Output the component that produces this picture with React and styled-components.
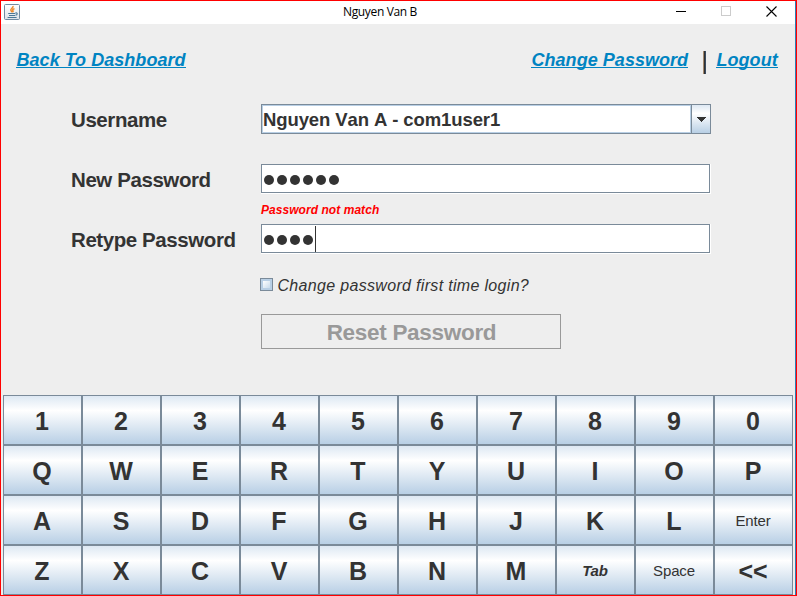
import React from "react";
import styled, { createGlobalStyle } from "styled-components";

const GlobalStyle = createGlobalStyle`
  * { box-sizing: border-box; }
  html, body { margin: 0; padding: 0; overflow: hidden; }
  body { font-family: "Liberation Sans", Arial, sans-serif; color: #333; font-kerning: none; }
`;

const Window = styled.div`
  width: 797px;
  height: 596px;
  display: flex;
  flex-direction: column;
  background: #eee;
  border: 1px solid #f00;
  box-shadow: inset -1px 0 #2f7fb5;
`;

const TitleBar = styled.header`
  height: 23px;
  flex: none;
  display: grid;
  grid-template-columns: 138px 1fr 138px;
  align-items: center;
  background: #fff;
  margin-right: 1px;
  padding: 0 0 2px 3px;
`;

const Title = styled.div`
  text-align: center;
  font: 12px/18px "Open Sans", sans-serif;
  color: #000;
  letter-spacing: -0.35px;
  padding-right: 39px;
`;

const WindowControls = styled.div`
  display: flex;
  align-items: center;
  justify-content: flex-end;
  padding-right: 18px;
  gap: 34px;
  svg { display: block; }
`;

const Nav = styled.nav`
  flex: none;
  height: 80px;
  display: flex;
  align-items: flex-start;
  padding: 24px 18px 0 15px;
`;

const NavLink = styled.a`
  font: italic bold 18px/24px "Liberation Sans", Arial, sans-serif;
  color: #0084c2;
  letter-spacing: 0.04px;
  background: linear-gradient(#0084c2, #0084c2) 0 19px / 100% 1px no-repeat;
  white-space: nowrap;
  width: ${(p) => p.$w}px;
  padding-left: 0.5px;
  margin-left: ${(p) => (p.$end ? "auto" : 0)};
`;

const Divider = styled.span`
  width: 3px;
  height: 23px;
  margin: 3px 10px 0 15px;
  background: linear-gradient(90deg, #a58a70 1px, #303030 1px, #303030 2px, #3b4c60 2px);
`;

const Form = styled.main`
  flex: none;
  height: 291px;
  display: grid;
  grid-template-columns: 190px 450px;
  grid-template-rows: 30px 30px 30px 30px 30px 31px 29px 35px;
  padding-left: 70px;
`;

const Label = styled.label`
  grid-column: 1;
  grid-row: ${(p) => p.$row};
  font-size: 20.5px;
  font-weight: bold;
  line-height: 32px;
  letter-spacing: -0.42px;
  white-space: nowrap;
`;

const Combo = styled.div`
  grid-column: 2;
  grid-row: 1;
  display: flex;
  border: 1px solid #7a8a99;
`;

const ComboValue = styled.div`
  flex: 1;
  background: #fff;
  border: 1px solid #b8cfe5;
  font-size: 18.5px;
  font-weight: bold;
  line-height: 28px;
  height: 28px;
  letter-spacing: -0.1px;
  white-space: nowrap;
`;

const ComboArrow = styled.div`
  width: 19px;
  border-left: 1px solid #7a8a99;
  background: linear-gradient(#dde8f3, #fff 30%, #b8cfe5);
  display: flex;
  align-items: center;
  padding-left: 4px;
`;

const PasswordField = styled.div`
  grid-column: 2;
  grid-row: ${(p) => p.$row};
  width: 450px;
  height: 30px;
  border-right: 1px solid #fff;
  border-bottom: 1px solid #fff;
`;

const FieldInner = styled.div`
  height: 29px;
  border: 1px solid #7a8a99;
  background: #fff;
  display: flex;
  align-items: center;
  gap: 3px;
  padding: 3px 0 0 2px;
`;

const Dot = styled.i`
  width: 10px;
  height: 10px;
  border-radius: 50%;
  background: #333;
`;

const Caret = styled.i`
  width: 1px;
  height: 26px;
  margin: -2px 0 0 -1px;
  background: #333;
`;

const ErrorText = styled.div`
  grid-column: 2;
  grid-row: 4;
  font-size: 12px;
  font-weight: bold;
  font-style: italic;
  line-height: 32px;
  letter-spacing: 0.05px;
  color: #f00;
`;

const CheckRow = styled.div`
  grid-column: 2;
  grid-row: 6 / 8;
  display: flex;
  align-items: center;
  margin-left: -1px;
  gap: 4.5px;
  padding-top: 4px;
  font-size: 16px;
  font-style: italic;
  letter-spacing: 0.32px;
  white-space: nowrap;
`;

const Checkbox = styled.span`
  width: 13px;
  height: 13px;
  border: 1px solid #7a8a99;
  background: linear-gradient(135deg, #fff, #c8dbec) center / 7px 7px no-repeat, #b8cfe5;
  margin-bottom: 4px;
`;

const ResetButton = styled.button`
  grid-column: 2;
  grid-row: 8;
  width: 300px;
  height: 35px;
  padding: 1px 0 0 1px;
  border: 1px solid #999;
  background: #eee;
  color: #999;
  font: bold 22.5px/34px "Liberation Sans", Arial, sans-serif;
  letter-spacing: -0.3px;
`;

const Keyboard = styled.section`
  flex: none;
  display: grid;
  grid-template-columns: repeat(10, 79px);
  grid-auto-rows: 50px;
  margin-left: 2px;
`;

const keyFonts = {
  big: 'bold 25px/46px "Liberation Sans", Arial, sans-serif',
  small: '15px/46px "Liberation Sans", Arial, sans-serif',
  tab: 'italic bold 15px/46px "Liberation Sans", Arial, sans-serif',
};

const Key = styled.button`
  padding: 2px 1px 0 0;
  border: 1px solid #7a8a99;
  background: linear-gradient(#dde8f3, #fff 30%, #b8cfe5);
  color: #333;
  font: ${(p) => keyFonts[p.$kind]};
  letter-spacing: ${(p) => (p.$kind === "big" ? 0 : -0.15)}px;
`;

const keys = [..."1234567890QWERTYUIOPASDFGHJKL", "Enter", ..."ZXCVBNM", "Tab", "Space", "<<"];
const kindOf = (k) => (k === "Tab" ? "tab" : k.length > 2 ? "small" : "big");

const JavaIcon = () => (
  <svg width="16" height="16" viewBox="0 0 16 16" fill="none">
    <defs>
      <linearGradient id="tile" x2="0" y2="1">
        <stop stopColor="#fff" />
        <stop offset="1" stopColor="#dce3ea" />
      </linearGradient>
    </defs>
    <rect x=".5" y=".5" width="15" height="15" rx="1" fill="url(#tile)" stroke="#728ba2" />
    <path d="M9 2c.6 1.8-2.6 2.5-2.2 4.2.2.8 1 1.2 1.2 2M10.5 4.6c-1.7.7-2.3 1.1-1.6 2 .5.7.1 1.2-.5 1.6" stroke="#ee8b2d" strokeWidth="1.5" />
    <path d="M4.2 9.5h7M5 11.5h6M3.6 13.5h9M11.4 9c2.4-.8 2.4 1.8 0 2.3" stroke="#4b7897" strokeWidth="1.1" />
  </svg>
);

const Dots = ({ count }) => Array.from({ length: count }, (_, i) => <Dot key={i} />);

export default function App() {
  return (
    <Window>
      <GlobalStyle />
      <TitleBar>
        <JavaIcon />
        <Title>Nguyen Van B</Title>
        <WindowControls>
          <svg width="11" height="11" shapeRendering="crispEdges"><path d="M0 5.5h10" stroke="#000" /></svg>
          <svg width="11" height="11" shapeRendering="crispEdges"><path d="M.5.5h9v9h-9z" fill="none" stroke="#ccc" /></svg>
          <svg width="11" height="11"><path d="M.5.5l10 10M10.5.5l-10 10" stroke="#000" strokeWidth="1.1" /></svg>
        </WindowControls>
      </TitleBar>
      <Nav>
        <NavLink $w={170}>Back To Dashboard</NavLink>
        <NavLink $w={157} $end>Change Password</NavLink>
        <Divider />
        <NavLink $w={62}>Logout</NavLink>
      </Nav>
      <Form>
        <Label $row={1}>Username</Label>
        <Combo>
          <ComboValue>Nguyen Van A - com1user1</ComboValue>
          <ComboArrow>
            <svg width="10" height="5" shapeRendering="crispEdges"><path d="M0 0h10L5 5z" fill="#333" /></svg>
          </ComboArrow>
        </Combo>
        <Label $row={3}>New Password</Label>
        <PasswordField $row={3}>
          <FieldInner><Dots count={6} /></FieldInner>
        </PasswordField>
        <ErrorText>Password not match</ErrorText>
        <Label $row={5}>Retype Password</Label>
        <PasswordField $row={5}>
          <FieldInner><Dots count={4} /><Caret /></FieldInner>
        </PasswordField>
        <CheckRow><Checkbox />Change password first time login?</CheckRow>
        <ResetButton disabled>Reset Password</ResetButton>
      </Form>
      <Keyboard>
        {keys.map((k) => <Key key={k} $kind={kindOf(k)}>{k}</Key>)}
      </Keyboard>
    </Window>
  );
}
